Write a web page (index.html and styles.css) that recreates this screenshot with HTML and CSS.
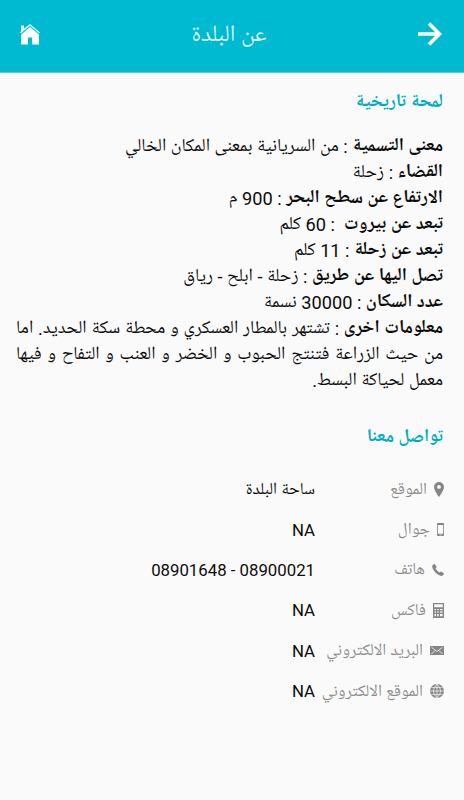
FILE: index.html
```html
<!DOCTYPE html>
<html lang="ar" dir="rtl">
<head>
<meta charset="utf-8">
<meta name="viewport" content="width=device-width, initial-scale=1">
<title>عن البلدة</title>
<link rel="stylesheet" href="styles.css">
</head>
<body>
<header class="bar">
  <svg class="back" viewBox="0 0 24 24"><path d="M0 12H22M11 1.5L21.5 12L11 22.5" fill="none" stroke="#fff" stroke-width="3.6"/></svg>
  <h1>عن البلدة</h1>
  <svg class="home" viewBox="0 0 20 21"><path d="M1 6V1.5H4V4.5L10 0L20 8.4L19 9.3L10 1.8L1 9.3L0 8.4L1.2 7.3Z" opacity=".85"/><path d="M10 3L19 10.4V20.5H12.2V13.5H8V20.5H1.2V10.4Z"/></svg>
</header>
<main>
  <h2>لمحة تاريخية</h2>
  <div class="info">
    <p><b>معنى التسمية</b> : من السريانية بمعنى المكان الخالي</p>
    <p><b>القضاء</b> : زحلة</p>
    <p><b>الارتفاع عن سطح البحر</b> : 900 م</p>
    <p><b>تبعد عن بيروت</b> &nbsp;: 60 كلم</p>
    <p><b>تبعد عن زحلة</b> : 11 كلم</p>
    <p><b>تصل اليها عن طريق</b> : زحلة - ابلح - رياق</p>
    <p><b>عدد السكان</b> : 30000 نسمة</p>
    <p><b>معلومات اخرى</b> : تشتهر بالمطار العسكري و محطة سكة الحديد. اما من حيث الزراعة فتنتج الحبوب و الخضر و العنب و التفاح و فيها معمل لحياكة البسط.</p>
  </div>
  <h2>تواصل معنا</h2>
  <dl class="contact">
    <div><dt><svg width="10" height="15" viewBox="0 0 10 15"><path fill-rule="evenodd" d="M5 0A5 5 0 0 1 10 5C10 8.5 5 15 5 15S0 8.5 0 5A5 5 0 0 1 5 0ZM5 3A1.9 1.9 0 1 0 5 6.8A1.9 1.9 0 0 0 5 3Z"/></svg>الموقع</dt><dd>ساحة البلدة</dd></div>
    <div><dt><svg width="7" height="13" viewBox="0 0 7 13"><path fill-rule="evenodd" d="M1 0H6Q7 0 7 1V12Q7 13 6 13H1Q0 13 0 12V1Q0 0 1 0ZM.8 2V10.7H6.2V2ZM2.5 11.5V12.2H4.5V11.5Z"/></svg>جوال</dt><dd>NA</dd></div>
    <div><dt><svg width="12" height="12" viewBox="0 0 12 12"><path d="M.3 1.4L2 0Q2.6-.2 3 .4L4.4 2.5Q4.7 3.2 4.1 3.7L3.4 4.3Q4.9 7 7.6 8.6L8.4 7.9Q8.9 7.4 9.5 7.8L11.6 9.2Q12.2 9.7 11.8 10.3L10.4 11.8Q7.2 12.4 3.4 8.5Q-.5 4.5.3 1.4Z"/></svg>هاتف</dt><dd dir="ltr">08901648 - 08900021</dd></div>
    <div><dt><svg width="11" height="15" viewBox="0 0 11 15"><path fill-rule="evenodd" d="M0 0H11V15H0ZM1.2 1.2V4.2H9.8V1.2ZM1.5 5.9V7.2H3V5.9ZM4.2 5.9V7.2H5.7V5.9ZM7 5.9V7.2H9.6V5.9ZM1.5 8.4V9.7H3V8.4ZM4.2 8.4V9.7H5.7V8.4ZM7 8.4V9.7H9.6V8.4ZM1.5 11V13.3H3V11ZM4.2 11V13.3H5.7V11ZM7 11V13.3H9.6V11Z"/></svg>فاكس</dt><dd>NA</dd></div>
    <div><dt><svg width="14" height="9" viewBox="0 0 14 9"><path d="M0 0H14V9H0Z"/><path d="M1.5 1.3L7 5.5L12.5 1.3M1.5 8L5 4.5M12.5 8L9 4.5" fill="none" stroke="#fafafa" stroke-width=".8"/></svg>البريد الالكتروني</dt><dd>NA</dd></div>
    <div><dt><svg width="14" height="14" viewBox="0 0 14 14"><circle cx="7" cy="7" r="7"/><path d="M7 0V14M0 7H14M1.4 3.6H12.6M1.4 10.4H12.6M7 .3C2.4 4 2.4 10 7 13.7M7 .3C11.6 4 11.6 10 7 13.7" fill="none" stroke="#fafafa" stroke-width=".7"/></svg>الموقع الالكتروني</dt><dd>NA</dd></div>
  </dl>
</main>
</body>
</html>
```
FILE: styles.css
```css
* { box-sizing: border-box; }
body { margin: 0; min-height: 800px; background: #fafafa; color: #0c0c0c; font-family: Roboto, "Noto Naskh Arabic UI", "Noto Naskh Arabic", sans-serif; }
h1, h2, p, dl, dt, dd { margin: 0; }
.bar { height: 73px; padding: 0 22px 4px 20px; background: #00bad2; border-bottom: 1px solid #4fcfdf; display: flex; align-items: center; justify-content: space-between; }
.back { width: 24px; height: 24px; }
.home { width: 20px; height: 21px; fill: #fff; }
h1 { padding: 3px 0 0 0; font-size: 23.4px; line-height: 30px; font-weight: 400; color: #d9f7fb; }
main { padding: 17px 21px 0 16px; }
h2 { font-size: 18.1px; line-height: 26px; font-weight: 700; color: #00acc1; }
.info { padding: 18px 0 31px; font-size: 18.2px; line-height: 26px; text-align: justify; }
b { font-weight: 700; }
.contact { margin-right: -1px; padding-top: 18px; }
.contact div { display: flex; align-items: center; height: 40.4px; }
dt { width: 129px; display: flex; align-items: center; gap: 7px; font-size: 16.6px; color: #8c8c8c; white-space: nowrap; flex: none; }
dt svg { fill: #858585; flex: none; }
dd { font-size: 16.8px; }
```
